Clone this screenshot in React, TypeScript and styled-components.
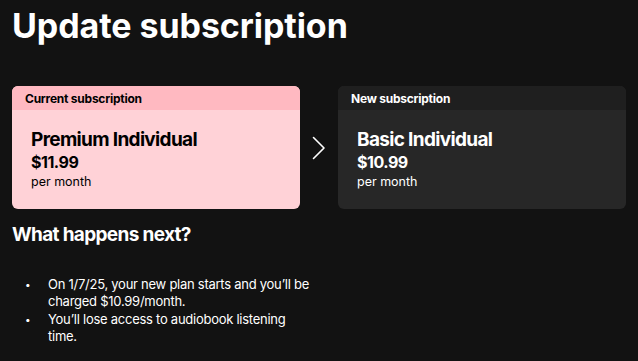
import React from 'react';
import styled, { createGlobalStyle } from 'styled-components';

const GlobalStyle = createGlobalStyle`
  html, body {
    margin: 0;
    padding: 0;
    background: #121212;
  }
  body {
    font-family: Inter, "Noto Sans", Arial, sans-serif;
    color: #fff;
    -webkit-font-smoothing: antialiased;
  }
`;

const Page = styled.div`
  width: 638px;
  height: 361px;
  overflow: hidden;
  background: #121212;
  padding: 0 12px;
  box-sizing: border-box;
`;

const Title = styled.h1`
  margin: 0;
  padding-top: 6px;
  font-size: 34px;
  line-height: 40px;
  font-weight: 700;
  letter-spacing: -0.002em;
  color: #fff;
`;

const Plans = styled.div`
  display: flex;
  align-items: stretch;
  margin-top: 40px;
`;

const Card = styled.div<{ $current?: boolean }>`
  width: 288px;
  height: 123px;
  border-radius: 6px;
  overflow: hidden;
  display: flex;
  flex-direction: column;
  background: ${(p) => (p.$current ? '#ffd2d7' : '#272727')};
  color: ${(p) => (p.$current ? '#000' : '#fff')};
`;

const CardHeader = styled.div<{ $current?: boolean }>`
  height: 24px;
  padding: 0 13px;
  display: flex;
  align-items: center;
  font-size: 12px;
  font-weight: 700;
  letter-spacing: -0.02em;
  background: ${(p) => (p.$current ? '#ffb9c1' : '#1f1f1f')};
`;

const CardBody = styled.div`
  padding: 18px 19px 0;
`;

const PlanName = styled.div`
  font-size: 19px;
  line-height: 24px;
  font-weight: 700;
  letter-spacing: -0.035em;
`;

const Price = styled.div`
  font-size: 16px;
  line-height: 20px;
  font-weight: 700;
  letter-spacing: -0.03em;
`;

const Period = styled.div`
  font-size: 12.5px;
  line-height: 18px;
  margin-top: 1px;
`;

const Arrow = styled.div`
  width: 38px;
  display: flex;
  align-items: center;
  justify-content: center;
  color: #fff;
`;

const Subtitle = styled.h2`
  margin: 14px 0 0;
  font-size: 19px;
  line-height: 24px;
  font-weight: 700;
  letter-spacing: -0.035em;
`;

const Steps = styled.ul`
  margin: 29px 0 0;
  padding: 0;
  list-style: none;
  display: flex;
  flex-direction: column;
  gap: 1px;
`;

const Step = styled.li`
  display: flex;
  font-size: 13px;
  line-height: 17px;
  letter-spacing: -0.02em;
  color: #fff;

  &::before {
    content: '•';
    flex: 0 0 36px;
    padding-left: 13px;
    box-sizing: border-box;
    font-size: 10px;
  }
`;

const StepText = styled.span`
  width: 264px;
`;

const App: React.FC = () => {
  return (
    <>
      <GlobalStyle />
      <Page>
        <Title>Update subscription</Title>
        <Plans>
          <Card $current>
            <CardHeader $current>Current subscription</CardHeader>
            <CardBody>
              <PlanName>Premium Individual</PlanName>
              <Price>$11.99</Price>
              <Period>per month</Period>
            </CardBody>
          </Card>
          <Arrow>
            <svg width="14" height="24" viewBox="0 0 14 24" fill="none">
              <path d="M1.5 1.5 L12 12 L1.5 22.5" stroke="#fff" strokeWidth="1.6" strokeLinecap="round" strokeLinejoin="round" />
            </svg>
          </Arrow>
          <Card>
            <CardHeader>New subscription</CardHeader>
            <CardBody>
              <PlanName>Basic Individual</PlanName>
              <Price>$10.99</Price>
              <Period>per month</Period>
            </CardBody>
          </Card>
        </Plans>
        <Subtitle>What happens next?</Subtitle>
        <Steps>
          <Step>
            <StepText>On 1/7/25, your new plan starts and you’ll be charged $10.99/month.</StepText>
          </Step>
          <Step>
            <StepText>You’ll lose access to audiobook listening time.</StepText>
          </Step>
        </Steps>
      </Page>
    </>
  );
};

export default App;
